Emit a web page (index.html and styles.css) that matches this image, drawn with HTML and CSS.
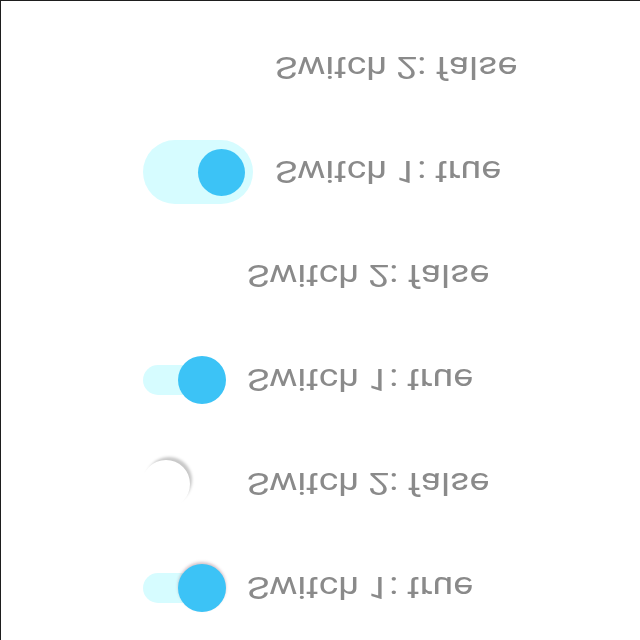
FILE: index.html
```html
<!DOCTYPE html>
<html lang="en">
<head>
    <meta charset="UTF-8">
    <meta name="viewport" content="width=device-width, initial-scale=1.0">
    <title>Switches</title>
    <link rel="stylesheet" href="styles.css">
</head>
<body>
    <div class="frame">
        <div class="flip">
            <div class="row small">
                <span class="switch on shadowed"><span class="track"></span><span class="knob"></span></span>
                <span class="label">Switch 1: true</span>
            </div>
            <div class="row small">
                <span class="switch off"><span class="knob"></span></span>
                <span class="label">Switch 2: false</span>
            </div>
            <div class="row small">
                <span class="switch on"><span class="track"></span><span class="knob"></span></span>
                <span class="label">Switch 1: true</span>
            </div>
            <div class="row small">
                <span class="switch hidden"></span>
                <span class="label">Switch 2: false</span>
            </div>
            <div class="row big">
                <span class="switch on"><span class="track"></span><span class="knob"></span></span>
                <span class="label">Switch 1: true</span>
            </div>
            <div class="row big">
                <span class="switch hidden"></span>
                <span class="label">Switch 2: false</span>
            </div>
        </div>
    </div>
</body>
</html>
```

FILE: styles.css
```css
html, body {
    margin: 0;
    padding: 0;
    background-color: #fff;
}
.frame {
    width: 640px;
    height: 640px;
    box-sizing: border-box;
    border-top: 1px solid #1e1e1e;
    border-left: 1px solid #1e1e1e;
    overflow: hidden;
}
.flip {
    height: 100%;
    transform: scaleY(-1);
    filter: blur(0.6px);
    font-family: Roboto, "Liberation Sans", sans-serif;
    font-size: 32px;
    color: #8a8a8a;
}
.row {
    height: 104px;
    display: flex;
    align-items: center;
    padding-left: 141px;
}
.switch {
    position: relative;
    flex: none;
    height: 50px;
}
.small .switch {
    width: 105px;
}
.big .switch {
    width: 133px;
    height: 64px;
}
.track {
    position: absolute;
    left: 1px;
    top: 10px;
    width: 80px;
    height: 30px;
    border-radius: 15px;
    background-color: #d6fcff;
}
.knob {
    position: absolute;
    left: 36px;
    top: 1px;
    width: 48px;
    height: 48px;
    border-radius: 50%;
    background-color: #3cc3f6;
}
.shadowed .knob {
    box-shadow: 0 2px 3px rgba(120, 60, 80, 0.3);
}
.off .knob {
    left: 0;
    background-color: #fff;
    box-shadow: 3px 4px 3px -1px rgba(0, 0, 0, 0.22);
}
.big .track {
    left: 1px;
    top: 0;
    width: 110px;
    height: 64px;
    border-radius: 32px;
}
.big .knob {
    left: 56px;
    top: 8px;
    width: 47px;
    height: 47px;
}
.label {
    display: inline-block;
    white-space: nowrap;
    line-height: 1;
    transform: scaleX(1.17);
    transform-origin: left center;
}
```
